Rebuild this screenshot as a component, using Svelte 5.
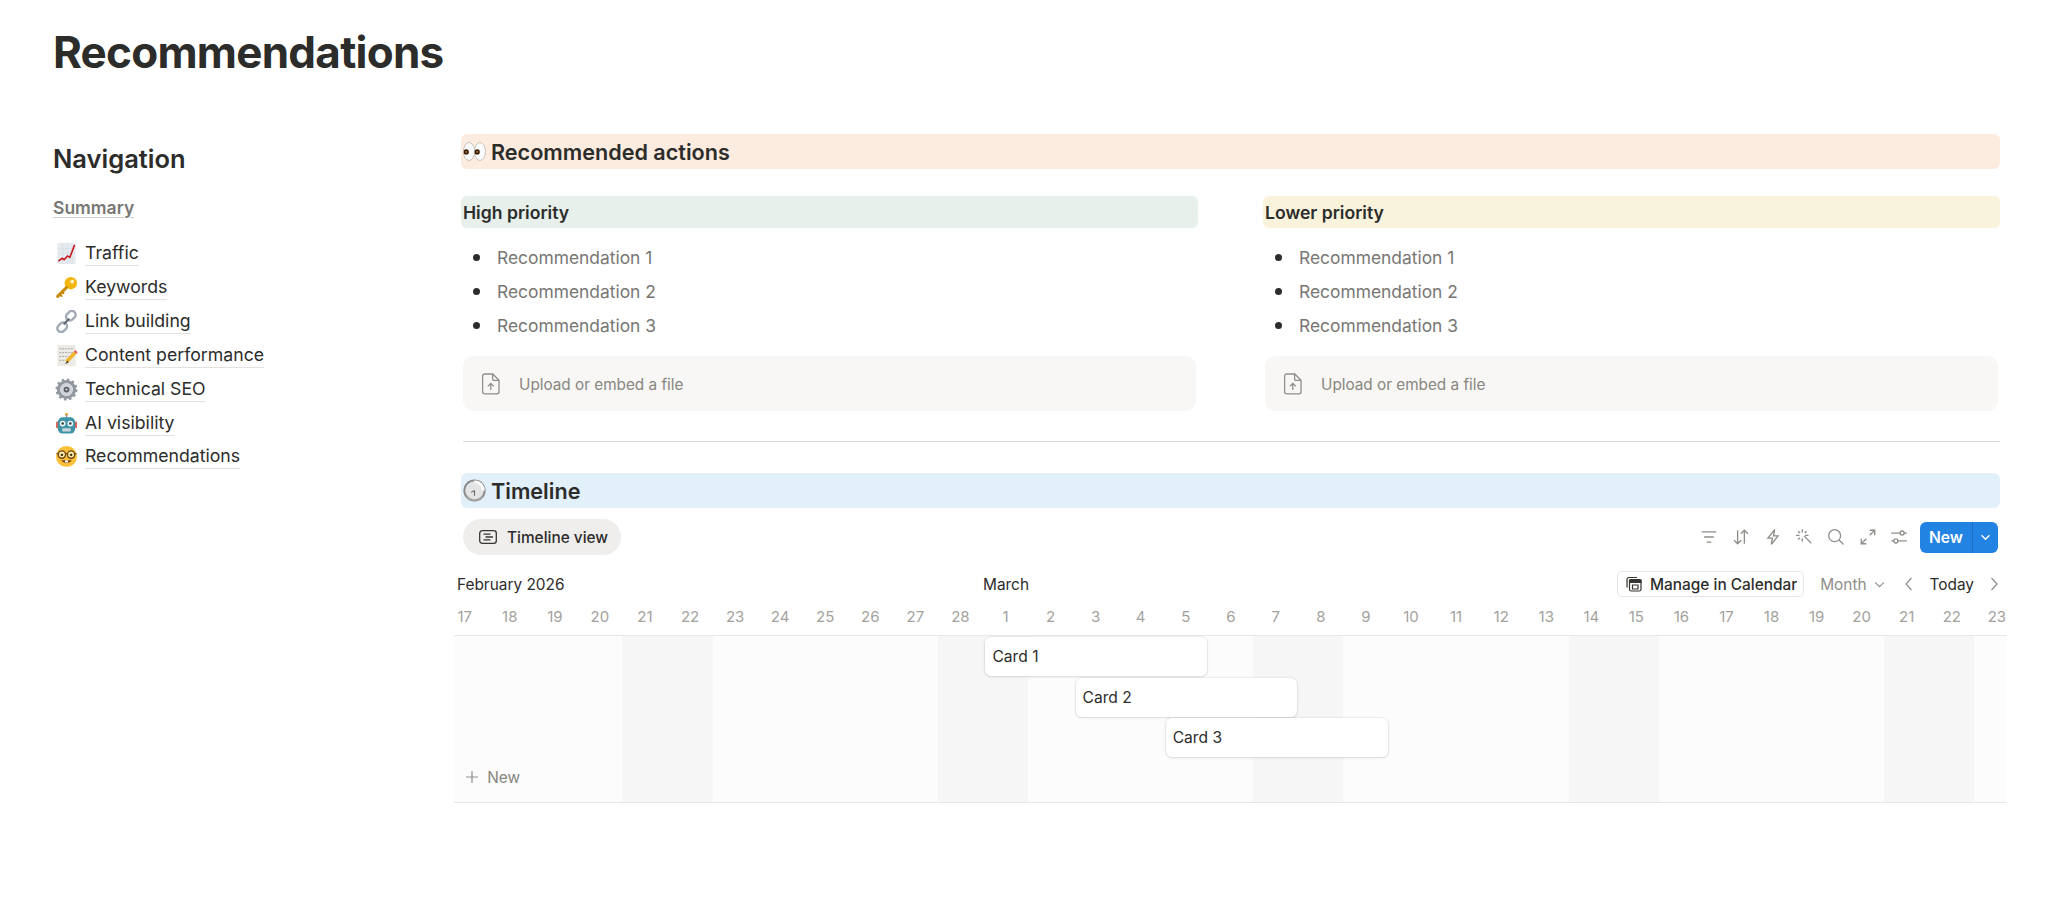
<script>
  const pages = [
    { icon: "chart", label: "Traffic" },
    { icon: "key", label: "Keywords" },
    { icon: "link", label: "Link building" },
    { icon: "memo", label: "Content performance" },
    { icon: "gear", label: "Technical SEO" },
    { icon: "robot", label: "AI visibility" },
    { icon: "nerd", label: "Recommendations" },
  ];

  const priorities = [
    { title: "High priority", tone: "green" },
    { title: "Lower priority", tone: "yellow" },
  ];
  const recommendations = ["Recommendation 1", "Recommendation 2", "Recommendation 3"];

  // 17 Feb to 23 Mar, weekends are the two shaded columns
  const days = [];
  for (let d = 17; d <= 28; d++) days.push(d);
  for (let d = 1; d <= 23; d++) days.push(d);
  const weekends = [4, 11, 18, 25, 32];

  const cards = [
    { name: "Card 1", col: 12, row: 1 },
    { name: "Card 2", col: 14, row: 2 },
    { name: "Card 3", col: 16, row: 3 },
  ];
</script>

{#snippet emoji(name)}
  <svg class="emoji" viewBox="0 0 24 24" aria-hidden="true">
    {#if name === "chart"}
      <rect x="2.5" y="1" width="19" height="22" fill="#e6ebf0" />
      <path d="M2.5 7h19M2.5 12h19M2.5 17h19M8 1v22M13 1v22M18 1v22" stroke="#d3dae2" stroke-width="0.6" />
      <path d="M3.5 20l4-3 2 1.5 3.5-4 2.5 1.5L20.5 3" fill="none" stroke="#c8161d" stroke-width="1.6" />
    {:else if name === "key"}
      <circle cx="16.5" cy="7.5" r="6.5" fill="#f3b50f" />
      <circle cx="18" cy="5.8" r="2" fill="#fdf3c8" />
      <path d="M12 12L2.8 21.2" stroke="#c98a0a" stroke-width="3.2" stroke-linecap="round" />
      <path d="M5 19l2.5 2.5M7.5 16.5l2 2" stroke="#c98a0a" stroke-width="2" />
    {:else if name === "link"}
      <g fill="none" stroke="#a3acb6" stroke-width="2.6">
        <rect x="11" y="2" width="11" height="8" rx="4" transform="rotate(-45 16.5 6)" />
        <rect x="2" y="14" width="11" height="8" rx="4" transform="rotate(-45 7.5 18)" />
      </g>
      <path d="M9 15l6-6" stroke="#5e666f" stroke-width="2.2" />
    {:else if name === "memo"}
      <rect x="2.5" y="1" width="19" height="22" fill="#eceae4" />
      <path d="M4.5 5h15M4.5 9h15M4.5 13h10M4.5 17h7" stroke="#a9a7a0" stroke-width="1" stroke-dasharray="2 1" />
      <path d="M21.5 8.5l-9.5 10" stroke="#f0b429" stroke-width="3.6" />
      <path d="M21 9l1.5-1.5" stroke="#e4606d" stroke-width="3.6" />
      <path d="M13.2 17.2l-3 3.6 4.2-1.6z" fill="#4a3b2a" />
    {:else if name === "gear"}
      <circle cx="12" cy="12" r="8.3" fill="none" stroke="#9298a0" stroke-width="3.4" />
      <circle cx="12" cy="12" r="10" fill="none" stroke="#9298a0" stroke-width="3" stroke-dasharray="2.6 2.64" />
      <circle cx="12" cy="12" r="6.4" fill="#d0d3d7" />
      <circle cx="12" cy="12" r="3" fill="#5a5f65" />
      <circle cx="12" cy="12" r="1" fill="#e6e8ea" />
    {:else if name === "robot"}
      <circle cx="12" cy="2.4" r="1.6" fill="#f0a23a" />
      <rect x="11.2" y="3" width="1.6" height="3" fill="#8b99a3" />
      <rect x="1" y="10" width="3" height="7" rx="1.4" fill="#d9645a" />
      <rect x="20" y="10" width="3" height="7" rx="1.4" fill="#d9645a" />
      <rect x="3" y="5.5" width="18" height="17" rx="5" fill="#3f93a6" />
      <circle cx="8" cy="12" r="3" fill="#eef4f6" />
      <circle cx="16" cy="12" r="3" fill="#eef4f6" />
      <circle cx="8" cy="12" r="1.3" fill="#2b3a42" />
      <circle cx="16" cy="12" r="1.3" fill="#2b3a42" />
      <rect x="7.5" y="17" width="9" height="3.4" rx="1" fill="#c9d4d8" />
    {:else if name === "nerd"}
      <circle cx="12" cy="12" r="11" fill="#fbbf3a" />
      <path d="M1.6 9h20.8" stroke="#6b4514" stroke-width="1.2" />
      <circle cx="7.2" cy="10" r="3.8" fill="#fde9a8" stroke="#6b4514" stroke-width="1.4" />
      <circle cx="16.8" cy="10" r="3.8" fill="#fde9a8" stroke="#6b4514" stroke-width="1.4" />
      <circle cx="7.2" cy="10.3" r="1.3" fill="#3d2a10" />
      <circle cx="16.8" cy="10.3" r="1.3" fill="#3d2a10" />
      <path d="M6.5 16c2.5 3.8 8.5 3.8 11 0z" fill="#7a3d14" />
      <rect x="10.4" y="16" width="3.2" height="2.2" fill="#fff" />
    {:else if name === "eyes"}
      <ellipse cx="6.3" cy="12" rx="5.8" ry="9.4" fill="#fafafa" stroke="#b9b6b2" stroke-width="0.8" />
      <ellipse cx="17.7" cy="12" rx="5.8" ry="9.4" fill="#fafafa" stroke="#b9b6b2" stroke-width="0.8" />
      <circle cx="3.4" cy="12.4" r="2.7" fill="#2a1a08" />
      <circle cx="14.8" cy="12.4" r="2.7" fill="#2a1a08" />
      <circle cx="3.4" cy="12.4" r="1.1" fill="#b5670f" />
      <circle cx="14.8" cy="12.4" r="1.1" fill="#b5670f" />
    {:else if name === "clock"}
      <circle cx="12" cy="12" r="11.6" fill="#8a8a8a" />
      <circle cx="12" cy="12" r="9.6" fill="#e4e4e4" />
      <path d="M12 2.8a9.2 9.2 0 0 1 9.2 9.2" fill="none" stroke="#fff" stroke-width="3" />
      <path d="M4 18a10 10 0 0 0 16 0" fill="none" stroke="#a8a8a8" stroke-width="2" />
      <path d="M12 12v5.5M12 12l-3.5 2" stroke="#666" stroke-width="1.1" fill="none" />
    {/if}
  </svg>
{/snippet}

{#snippet fileIcon()}
  <svg class="upload-icon" viewBox="0 0 18 22" aria-hidden="true">
    <path d="M2.6 1h8.2L17 7.2v11.6a2 2 0 0 1-2 2H2.6a2 2 0 0 1-2-2V3a2 2 0 0 1 2-2zM10.6 1.2V6a1.4 1.4 0 0 0 1.4 1.4h4.8" />
    <path d="M8.8 17v-6.2M5.8 13.4l3-3 3 3" />
  </svg>
{/snippet}

<div class="page">
  <h1>Recommendations</h1>

  <div class="content">
    <aside>
      <h2>Navigation</h2>
      <a class="summary" href="#summary">Summary</a>
      <ul class="nav">
        {#each pages as page}
          <li>
            {@render emoji(page.icon)}
            <span>{page.label}</span>
          </li>
        {/each}
      </ul>
    </aside>

    <main>
      <h3 class="banner orange">{@render emoji("eyes")}Recommended actions</h3>

      <div class="columns">
        {#each priorities as group}
          <section>
            <h4 class={group.tone}>{group.title}</h4>
            <ul class="recs">
              {#each recommendations as rec}
                <li>{rec}</li>
              {/each}
            </ul>
            <div class="upload">
              {@render fileIcon()}
              <span>Upload or embed a file</span>
            </div>
          </section>
        {/each}
      </div>

      <hr />

      <h3 class="banner blue">{@render emoji("clock")}Timeline</h3>

      <div class="toolbar">
        <button class="pill">
          <svg viewBox="0 0 18 14" aria-hidden="true">
            <rect x="0.7" y="0.7" width="16.6" height="12.6" rx="2.6" />
            <path d="M4.5 4.2h7M6.5 7h7.5M4.5 9.8h7" />
          </svg>
          Timeline view
        </button>
        <div class="tools">
          <svg viewBox="0 0 16 16"><path d="M1.5 3.5h13M3.7 8h8.6M6 12.5h4" /></svg>
          <svg viewBox="0 0 16 16"><path d="M5 2v12M1.8 10.8L5 14l3.2-3.2M11 14V2M7.8 5.2L11 2l3.2 3.2" /></svg>
          <svg viewBox="0 0 16 16"><path d="M9.5 1.5L3.5 9h4l-1 5.5L12.5 7h-4z" /></svg>
          <svg viewBox="0 0 16 16"><path d="M8 7l6.5 6.5M6.5 1v3M6.5 9v3M1 6.5h3M9 6.5h3M2.8 2.8l1.6 1.6M10.2 2.8L8.6 4.4M2.8 10.2l1.6-1.6" /></svg>
          <svg viewBox="0 0 16 16"><circle cx="6.8" cy="6.8" r="5.3" /><path d="M10.7 10.7l4 4" /></svg>
          <svg viewBox="0 0 16 16"><path d="M9.5 6.5L14 2M9.5 2H14v4.5M6.5 9.5L2 14M2 9.5V14h4.5" /></svg>
          <svg viewBox="0 0 16 16"><path d="M1 4.5h8M12.6 4.5H15M1 11.5h2.4M7 11.5h8" /><circle cx="10.8" cy="4.5" r="1.8" /><circle cx="5.2" cy="11.5" r="1.8" /></svg>
          <div class="new-btn">
            <span class="new-label">New</span>
            <span class="new-caret">
              <svg viewBox="0 0 12 8"><path d="M1.5 1.5L6 6l4.5-4.5" /></svg>
            </span>
          </div>
        </div>
      </div>

      <div class="timeline">
        <div class="months">
          <span class="feb">February 2026</span>
          <span>March</span>
          <div class="controls">
            <button class="manage">
              <svg viewBox="0 0 16 16" aria-hidden="true">
                <path d="M1 11.5V3.5a2 2 0 0 1 2-2h8" />
                <rect x="3.5" y="3.5" width="11.5" height="11.5" rx="1.8" />
                <path class="solid" d="M3.5 4h11.5v2.5H3.5z" />
                <path d="M6.5 9h5.5v4H6.5z" />
              </svg>
              Manage in Calendar
            </button>
            <span class="month-pick">
              Month
              <svg viewBox="0 0 12 8"><path d="M1 1.5L6 6.5l5-5" /></svg>
            </span>
            <svg class="arrow" viewBox="0 0 8 14"><path d="M6.5 1L1 7l5.5 6" /></svg>
            <span class="today">Today</span>
            <svg class="arrow" viewBox="0 0 8 14"><path d="M1.5 1L7 7l-5.5 6" /></svg>
          </div>
        </div>

        <div class="days">
          {#each days as day}
            <span>{day}</span>
          {/each}
        </div>

        <div class="body">
          <div class="track">
            {#each weekends as start}
              <div class="weekend" style="grid-column: {start + 1} / span 2"></div>
            {/each}
            {#each cards as card}
              <div class="card" style="grid-column: {card.col + 1} / span 5; grid-row: {card.row}">{card.name}</div>
            {/each}
            <div class="add">
              <svg viewBox="0 0 12 12"><path d="M6 0v12M0 6h12" /></svg>
              New
            </div>
          </div>
        </div>
      </div>
    </main>
  </div>
</div>

<style>
  :global(body) {
    margin: 0;
    background: #fff;
    color: #2c2c2b;
    font-family: Inter, "Liberation Sans", sans-serif;
    overflow: hidden;
  }

  .page {
    width: 2048px;
    height: 906px;
    padding: 25px 0 0 53px;
    box-sizing: border-box;
  }

  h1 {
    margin: 0;
    font-size: 44px;
    line-height: 54px;
    font-weight: 700;
    letter-spacing: -0.75px;
  }

  .content {
    display: flex;
    margin-top: 55px;
  }

  aside {
    width: 408px;
    flex: none;
    padding-top: 9px;
  }

  h2 {
    margin: 0;
    font-size: 25.5px;
    line-height: 32px;
    font-weight: 600;
  }

  .summary {
    display: block;
    width: fit-content;
    margin-top: 21px;
    font-size: 17.5px;
    line-height: 24px;
    font-weight: 600;
    color: #787774;
    text-decoration: underline;
    text-decoration-color: #cfcecb;
    text-underline-offset: 3px;
  }

  .nav {
    list-style: none;
    margin: 17px 0 0;
    padding: 0 0 0 2px;
  }

  .nav li {
    display: flex;
    align-items: center;
    gap: 7px;
    height: 33.85px;
    font-size: 17.7px;
  }

  .nav span {
    line-height: 24px;
    border-bottom: 1px solid #e3e2e0;
  }

  .emoji {
    width: 23px;
    height: 23px;
    flex: none;
  }

  main {
    width: 1539px;
    flex: none;
  }

  .banner {
    display: flex;
    align-items: center;
    gap: 5px;
    height: 35px;
    margin: 0;
    padding-left: 2px;
    border-radius: 6px;
    font-size: 21.6px;
    font-weight: 600;
  }

  .orange {
    background: #fcebdf;
  }

  .blue {
    background: #e2f0fa;
  }

  .columns {
    display: flex;
    justify-content: space-between;
    margin-top: 27px;
  }

  section {
    width: 737px;
  }

  h4 {
    height: 32px;
    margin: 0;
    padding-left: 2px;
    border-radius: 6px;
    font-size: 17.6px;
    line-height: 33px;
    font-weight: 600;
  }

  .green {
    background: #e7f0ea;
  }

  .yellow {
    background: #faf3dc;
  }

  .recs {
    list-style: none;
    margin: 12.5px 0 0;
    padding: 0 0 0 36px;
    font-size: 17.4px;
    line-height: 34px;
    color: #787774;
  }

  .recs li {
    position: relative;
  }

  .recs li::before {
    content: "";
    position: absolute;
    left: -24px;
    top: 13.5px;
    width: 7px;
    height: 7px;
    border-radius: 50%;
    background: #2c2c2b;
  }

  .upload {
    display: flex;
    align-items: center;
    gap: 19px;
    height: 55px;
    margin: 13.5px 2px 0;
    padding-left: 19px;
    border-radius: 10px;
    background: #f8f7f5;
    font-size: 15.3px;
    color: #87867f;
  }

  .upload span {
    margin-top: 1px;
  }

  .upload-icon {
    width: 18px;
    height: 22px;
    fill: none;
    stroke: #8f8e89;
    stroke-width: 1.3;
  }

  hr {
    height: 1px;
    margin: 30px 0 31px 2px;
    border: 0;
    background: #dcdbd9;
  }

  .toolbar {
    display: flex;
    align-items: center;
    justify-content: space-between;
    height: 36px;
    margin: 11px 2px 0;
  }

  button {
    font: inherit;
    color: inherit;
    background: none;
    border: 0;
    padding: 0;
  }

  .pill {
    display: flex;
    align-items: center;
    gap: 10px;
    height: 36px;
    padding: 0 13px 0 16px;
    border-radius: 18px;
    background: #efeeec;
    font-size: 15.4px;
    font-weight: 500;
  }

  .pill svg {
    width: 18px;
    height: 14px;
    fill: none;
    stroke: #37352f;
    stroke-width: 1.3;
  }

  .tools {
    display: flex;
    align-items: center;
    gap: 13.7px;
  }

  .tools > svg {
    width: 18px;
    height: 18px;
    fill: none;
    stroke: #8f8e89;
    stroke-width: 1.2;
  }

  .new-btn {
    display: flex;
    height: 31px;
    margin-left: -2px;
    border-radius: 6px;
    overflow: hidden;
    background: #2383e2;
    color: #fff;
    font-size: 15.6px;
    font-weight: 600;
  }

  .new-label {
    display: flex;
    align-items: center;
    justify-content: center;
    width: 52px;
    border-right: 1px solid #1a6fc4;
  }

  .new-caret {
    display: flex;
    align-items: center;
    justify-content: center;
    width: 25px;
  }

  .new-caret svg {
    width: 11px;
    height: 7px;
    fill: none;
    stroke: #fff;
    stroke-width: 1.6;
  }

  .timeline {
    width: 1553px;
    margin: 16px 0 0 -7px;
    overflow: hidden;
  }

  .months {
    display: flex;
    align-items: center;
    height: 26px;
    padding-left: 3px;
    font-size: 15.4px;
    font-weight: 400;
  }

  .feb {
    width: 526px;
    flex: none;
  }

  .controls {
    display: flex;
    align-items: center;
    margin-left: auto;
    padding-right: 9px;
  }

  .manage {
    display: flex;
    align-items: center;
    gap: 8px;
    height: 26px;
    padding: 0 6px 0 8px;
    box-sizing: border-box;
    border: 1px solid #e6e5e3;
    border-radius: 5px;
    font-size: 15.4px;
    font-weight: 500;
  }

  .manage svg {
    width: 16px;
    height: 16px;
    fill: none;
    stroke: #37352f;
    stroke-width: 1.2;
  }

  .manage .solid {
    fill: #37352f;
  }

  .month-pick {
    display: flex;
    align-items: center;
    gap: 7px;
    margin: 0 20px 0 16px;
    color: #8f8e89;
  }

  .month-pick svg {
    width: 11px;
    height: 7px;
    fill: none;
    stroke: #8f8e89;
    stroke-width: 1.2;
  }

  .arrow {
    width: 8px;
    height: 14px;
    fill: none;
    stroke: #8f8e89;
    stroke-width: 1.2;
  }

  .today {
    margin: 0 16px 0 17px;
  }

  .days,
  .track {
    display: grid;
    grid-template-columns: repeat(35, 45.07px);
    margin-left: -11.8px;
  }

  .days {
    height: 38px;
    align-items: center;
    font-size: 15px;
    color: #a3a29e;
    text-align: center;
  }

  .body {
    border-top: 1px solid #e8e7e5;
    border-bottom: 1px solid #e8e7e5;
    background: #fcfcfc;
  }

  .track {
    grid-template-rows: repeat(3, 40.5px) 44px;
    height: 166px;
  }

  .weekend {
    grid-row: 1 / -1;
    background: #f6f6f6;
  }

  .card {
    display: flex;
    align-items: center;
    height: 39px;
    margin: 1px 1px 0 2.5px;
    padding-left: 7px;
    box-sizing: border-box;
    border-radius: 6px;
    background: #fff;
    box-shadow: 0 0 0 1px rgba(15, 15, 15, 0.05), 0 1px 3px rgba(15, 15, 15, 0.1);
    font-size: 15.6px;
  }

  .add {
    grid-column: 1 / span 5;
    grid-row: 4;
    align-self: end;
    display: flex;
    align-items: center;
    gap: 9px;
    margin-bottom: 15px;
    padding-left: 24px;
    font-size: 15.4px;
    color: #87867f;
  }

  .add svg {
    width: 12px;
    height: 12px;
    stroke: #8f8e89;
    stroke-width: 1.2;
  }
</style>
